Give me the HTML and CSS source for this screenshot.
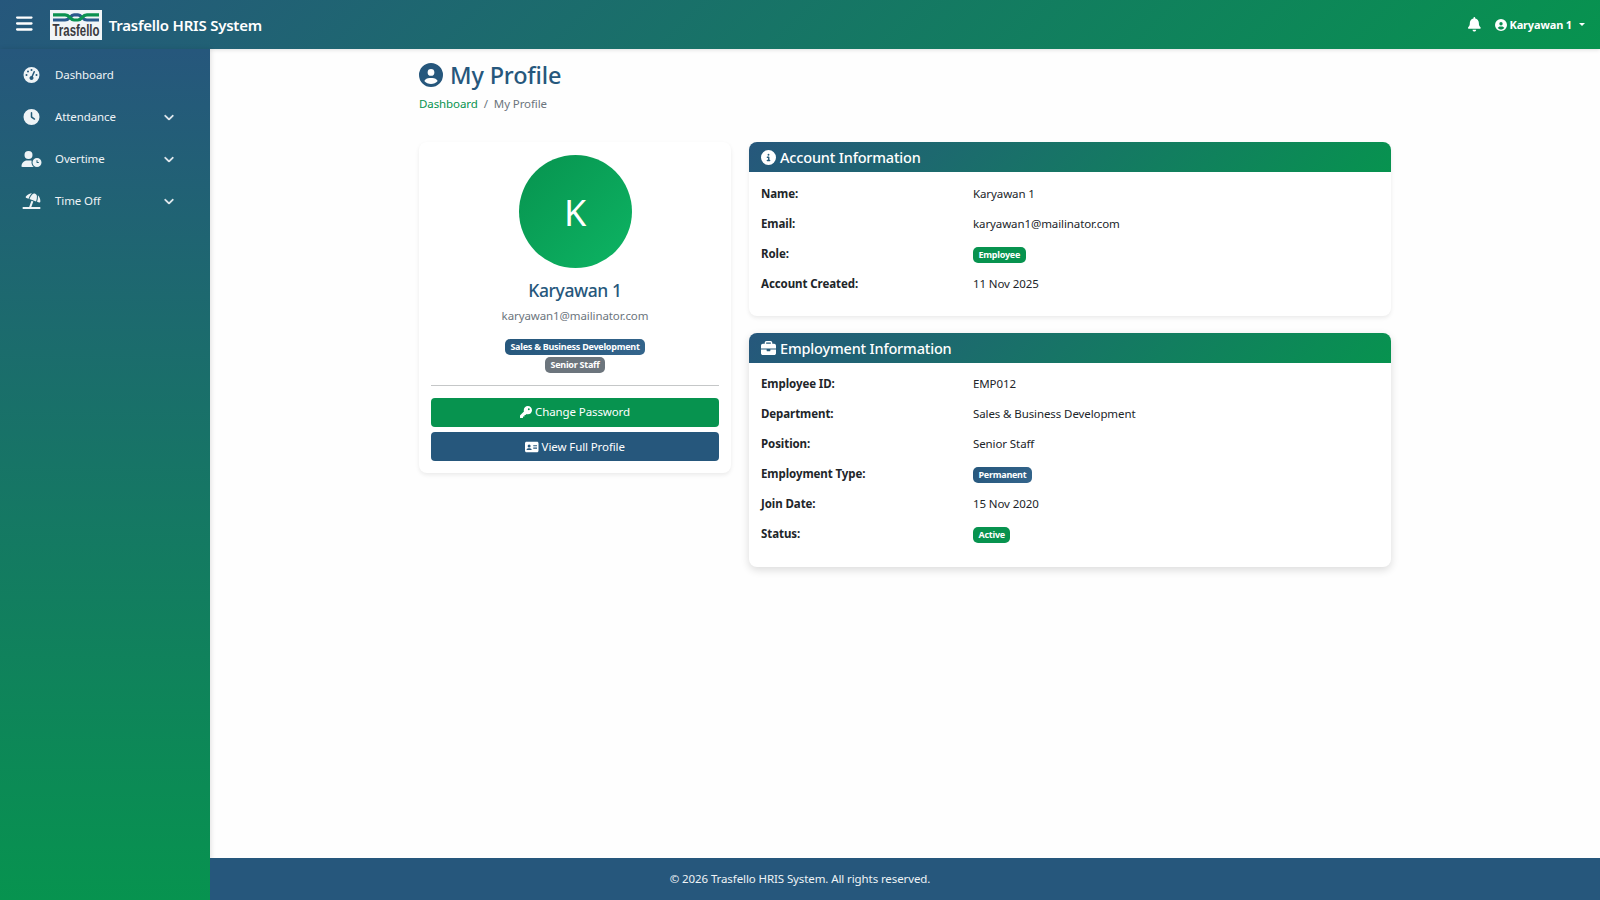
FILE: index.html
```
<!DOCTYPE html>
<html lang="en">
<head>
    <meta charset="UTF-8">
    <meta name="viewport" content="width=device-width, initial-scale=1.0">
    <title>My Profile - Trasfello HRIS System</title>
    <link rel="stylesheet" href="styles.css">
</head>
<body>

<!-- Top navbar -->
<nav class="navbar">
    <button class="navbar-toggle" type="button" aria-label="Toggle sidebar">
        <svg class="icon" viewBox="0 0 448 512"><path d="M0 96C0 78.3 14.3 64 32 64H416c17.7 0 32 14.3 32 32s-14.3 32-32 32H32C14.3 128 0 113.7 0 96zM0 256c0-17.7 14.3-32 32-32H416c17.7 0 32 14.3 32 32s-14.3 32-32 32H32c-17.7 0-32-14.3-32-32zM448 416c0 17.7-14.3 32-32 32H32c-17.7 0-32-14.3-32-32s14.3-32 32-32H416c17.7 0 32 14.3 32 32z"/></svg>
    </button>
    <a class="navbar-brand" href="#">
        <svg class="logo" viewBox="0 0 52 30">
            <rect width="52" height="30" fill="#f1f5f7"/>
            <g fill="none" stroke-width="3.2">
                <path stroke="#2a5a8c" d="M3 10H15C20 10 20 4.8 24 4.8H28C32 4.8 32 10 37 10H49"/>
                <path stroke="#0b9150" d="M3 4.8H15C20 4.8 20 10 24 10H28C32 10 32 4.8 37 4.8H49"/>
            </g>
            <text class="logo-text" x="2.5" y="26" textLength="47" lengthAdjust="spacingAndGlyphs">Trasfello</text>
        </svg>
        <span>Trasfello HRIS System</span>
    </a>
    <div class="navbar-right">
        <a class="navbar-bell" href="#" aria-label="Notifications">
            <svg class="icon" viewBox="0 0 448 512"><path d="M224 0c-17.700 0-32 14.300-32 32V51.200C119 66 64 130.600 64 208v18.800c0 47-17.300 92.400-48.500 127.600l-7.400 8.300c-8.400 9.400-10.400 22.900-5.300 34.400S19.400 416 32 416H416c12.600 0 24-7.400 29.200-18.900s3.100-25-5.300-34.400l-7.400-8.300C401.300 319.200 384 273.900 384 226.800V208c0-77.400-55-142-128-156.800V32c0-17.700-14.300-32-32-32zm45.300 493.300c12-12 18.700-28.300 18.700-45.300H224 160c0 17 6.700 33.300 18.700 45.300s28.300 18.700 45.300 18.700s33.300-6.700 45.300-18.700z"/></svg>
        </a>
        <a class="navbar-user" href="#">
            <svg class="icon" viewBox="0 0 512 512"><path d="M399 384.200C376.900 345.800 335.400 320 288 320H224c-47.400 0-88.900 25.800-111 64.200c35.200 39.200 86.200 63.800 143 63.800s107.800-24.700 143-63.800zM0 256a256 256 0 1 1 512 0A256 256 0 1 1 0 256zm256 16a72 72 0 1 0 0-144 72 72 0 1 0 0 144z"/></svg>
            <span>Karyawan 1</span>
            <i class="caret"></i>
        </a>
    </div>
</nav>

<div class="wrapper">
    <!-- Sidebar -->
    <aside class="sidebar">
        <ul class="sidebar-menu">
            <li><a href="#">
                <svg class="icon" viewBox="0 0 512 512"><path d="M0 256a256 256 0 1 1 512 0A256 256 0 1 1 0 256zM288 96a32 32 0 1 0 -64 0 32 32 0 1 0 64 0zM256 416c35.300 0 64-28.700 64-64c0-17.400-6.900-33.100-18.100-44.600L366 161.700c5.300-12.100-.2-26.300-12.300-31.600s-26.300 .2-31.600 12.300L257.900 288c-.6 0-1.300 0-1.900 0c-35.300 0-64 28.700-64 64s28.700 64 64 64zM176 144a32 32 0 1 0 -64 0 32 32 0 1 0 64 0zM96 288a32 32 0 1 0 0-64 32 32 0 1 0 0 64zm352-32a32 32 0 1 0 -64 0 32 32 0 1 0 64 0z"/></svg>
                <span>Dashboard</span>
            </a></li>
            <li><a href="#">
                <svg class="icon" viewBox="0 0 512 512"><path d="M256 0a256 256 0 1 1 0 512A256 256 0 1 1 256 0zM232 120V256c0 8 4 15.500 10.700 20l96 64c11 7.400 25.900 4.400 33.300-6.700s4.400-25.900-6.700-33.300L280 243.200V120c0-13.300-10.700-24-24-24s-24 10.700-24 24z"/></svg>
                <span>Attendance</span>
                <svg class="chevron" viewBox="0 0 512 512"><path d="M233.400 406.600c12.500 12.500 32.800 12.500 45.300 0l192-192c12.500-12.500 12.500-32.800 0-45.300s-32.800-12.500-45.300 0L256 338.700 86.600 169.400c-12.500-12.500-32.800-12.500-45.300 0s-12.500 32.800 0 45.300l192 192z"/></svg>
            </a></li>
            <li><a href="#">
                <svg class="icon" viewBox="0 0 640 512"><path d="M224 0a128 128 0 1 1 0 256A128 128 0 1 1 224 0zM178.300 304h91.400c20.600 0 40.400 3.500 58.800 9.900C323 331 320 349.100 320 368c0 59.500 29.500 112.100 74.800 144H29.700C13.300 512 0 498.700 0 482.300C0 383.800 79.800 304 178.300 304zM352 368a144 144 0 1 1 288 0 144 144 0 1 1 -288 0zm144-80c-8.800 0-16 7.200-16 16v64c0 8.800 7.200 16 16 16h48c8.800 0 16-7.200 16-16s-7.200-16-16-16H512V304c0-8.800-7.200-16-16-16z"/></svg>
                <span>Overtime</span>
                <svg class="chevron" viewBox="0 0 512 512"><path d="M233.400 406.600c12.500 12.500 32.800 12.500 45.300 0l192-192c12.500-12.500 12.500-32.800 0-45.300s-32.800-12.500-45.300 0L256 338.700 86.600 169.400c-12.500-12.500-32.800-12.500-45.300 0s-12.500 32.800 0 45.300l192 192z"/></svg>
            </a></li>
            <li><a href="#">
                <svg class="icon" viewBox="0 0 576 512"><path d="M346.300 271.800l-60.100-21.900L214 448H32c-17.700 0-32 14.300-32 32s14.300 32 32 32H544c17.700 0 32-14.300 32-32s-14.300-32-32-32H282.100l64.100-176.200zm121.100-.2l-3.300 9.100 67.700 24.600c18.100 6.600 38-4.200 39.600-23.400c6.500-78.500-23.900-155.500-80.800-208.500c2 8 3.200 16.300 3.400 24.800l.2 6c1.800 57-7.300 113.800-26.800 167.400zM462 99.100c-1.100-34.400-22.500-64.800-54.400-77.400c-.9-.4-1.900-.7-2.800-1.100c-33-11.700-69.800-2.400-93.100 23.800l-4 4.500C272.400 88.300 245 134.200 226.800 184l-3.300 9.100L434 269.700l3.300-9.100c18.100-49.800 26.600-102.500 24.900-155.500l-.2-6zM107.200 112.900c-11.100 15.700-2.800 36.800 15.300 43.400l71 25.800 3.300-9.100c19.500-53.600 49.100-103 87.100-145.500l4-4.500c6.200-6.900 13.100-13 20.500-18.200c-79.600 2.500-154.700 42.200-201.200 108z"/></svg>
                <span>Time Off</span>
                <svg class="chevron" viewBox="0 0 512 512"><path d="M233.400 406.600c12.500 12.500 32.800 12.500 45.300 0l192-192c12.500-12.500 12.500-32.800 0-45.300s-32.800-12.500-45.300 0L256 338.700 86.600 169.400c-12.500-12.500-32.800-12.500-45.300 0s-12.500 32.800 0 45.300l192 192z"/></svg>
            </a></li>
        </ul>
    </aside>

    <div class="page">
        <main class="content">
            <header class="page-header">
                <h1>
                    <svg class="icon" viewBox="0 0 512 512"><path d="M399 384.200C376.900 345.800 335.400 320 288 320H224c-47.400 0-88.900 25.800-111 64.200c35.200 39.200 86.200 63.800 143 63.800s107.800-24.700 143-63.800zM0 256a256 256 0 1 1 512 0A256 256 0 1 1 0 256zm256 16a72 72 0 1 0 0-144 72 72 0 1 0 0 144z"/></svg>
                    <span>My Profile</span>
                </h1>
                <ol class="breadcrumb">
                    <li><a href="#">Dashboard</a></li>
                    <li class="active">My Profile</li>
                </ol>
            </header>

            <div class="row">
                <!-- Profile card -->
                <section class="card profile-card">
                    <div class="avatar">K</div>
                    <h2>Karyawan 1</h2>
                    <p class="profile-email">karyawan1@mailinator.com</p>
                    <div class="profile-badges">
                        <span class="badge badge-primary">Sales &amp; Business Development</span>
                        <span class="badge badge-secondary">Senior Staff</span>
                    </div>
                    <hr>
                    <div class="profile-actions">
                        <a class="btn btn-success" href="#">
                            <svg class="icon" viewBox="0 0 512 512"><path d="M336 352c97.200 0 176-78.800 176-176S433.200 0 336 0S160 78.800 160 176c0 18.700 2.900 36.800 8.300 53.700L7 391c-4.500 4.500-7 10.600-7 17v80c0 13.300 10.700 24 24 24h80c13.300 0 24-10.700 24-24V448h40c13.300 0 24-10.700 24-24V384h40c6.400 0 12.500-2.500 17-7l33.300-33.300c16.900 5.400 35 8.300 53.700 8.300zM376 96a40 40 0 1 1 0 80 40 40 0 1 1 0-80z"/></svg>
                            <span>Change Password</span>
                        </a>
                        <a class="btn btn-primary" href="#">
                            <svg class="icon" viewBox="0 0 576 512"><path fill-rule="evenodd" d="M64 32C28.700 32 0 60.700 0 96V416c0 35.300 28.700 64 64 64H512c35.300 0 64-28.700 64-64V96c0-35.300-28.700-64-64-64H64zM64 384c0-44.200 35.800-80 80-80h64c44.200 0 80 35.800 80 80H64zM112 208a64 64 0 1 1 128 0 64 64 0 1 1 -128 0zM352 176H512V208H352zM352 240H512V272H352zM352 304H512V336H352z"/></svg>
                            <span>View Full Profile</span>
                        </a>
                    </div>
                </section>

                <div class="details">
                    <!-- Account information -->
                    <section class="card">
                        <h5 class="card-header">
                            <svg class="icon" viewBox="0 0 512 512"><path d="M256 512A256 256 0 1 0 256 0a256 256 0 1 0 0 512zM216 336h24V272H216c-13.300 0-24-10.700-24-24s10.700-24 24-24h48c13.300 0 24 10.700 24 24v88h8c13.300 0 24 10.700 24 24s-10.700 24-24 24H216c-13.300 0-24-10.700-24-24s10.700-24 24-24zm40-208a32 32 0 1 1 0 64 32 32 0 1 1 0-64z"/></svg>
                            <span>Account Information</span>
                        </h5>
                        <dl class="info-list">
                            <dt>Name:</dt>
                            <dd>Karyawan 1</dd>
                            <dt>Email:</dt>
                            <dd>karyawan1@mailinator.com</dd>
                            <dt>Role:</dt>
                            <dd><span class="badge badge-success">Employee</span></dd>
                            <dt>Account Created:</dt>
                            <dd>11 Nov 2025</dd>
                        </dl>
                    </section>

                    <!-- Employment information -->
                    <section class="card card-raised">
                        <h5 class="card-header">
                            <svg class="icon" viewBox="0 0 512 512"><path d="M184 48H328c4.400 0 8 3.600 8 8V96H176V56c0-4.400 3.600-8 8-8zm-56 8V96H64C28.700 96 0 124.700 0 160v96H192 320 512V160c0-35.300-28.700-64-64-64H384V56c0-30.900-25.100-56-56-56H184c-30.900 0-56 25.100-56 56zM512 288H320v32c0 17.700-14.300 32-32 32H224c-17.700 0-32-14.300-32-32V288H0V416c0 35.300 28.700 64 64 64H448c35.300 0 64-28.700 64-64V288z"/></svg>
                            <span>Employment Information</span>
                        </h5>
                        <dl class="info-list">
                            <dt>Employee ID:</dt>
                            <dd>EMP012</dd>
                            <dt>Department:</dt>
                            <dd>Sales &amp; Business Development</dd>
                            <dt>Position:</dt>
                            <dd>Senior Staff</dd>
                            <dt>Employment Type:</dt>
                            <dd><span class="badge badge-primary">Permanent</span></dd>
                            <dt>Join Date:</dt>
                            <dd>15 Nov 2020</dd>
                            <dt>Status:</dt>
                            <dd><span class="badge badge-success">Active</span></dd>
                        </dl>
                    </section>
                </div>
            </div>
        </main>

        <footer class="footer">&copy; 2026 Trasfello HRIS System. All rights reserved.</footer>
    </div>
</div>

</body>
</html>
```
FILE: styles.css
```
:root {
    --blue: #26577c;
    --green: #07934f;
    --gradient: linear-gradient(135deg, #26577c 0%, #07934f 100%);
    --text: #212529;
    --muted: #6c757d;
    --sidebar-width: 210px;
}

* {
    margin: 0;
    padding: 0;
    box-sizing: border-box;
}

body {
    font-family: "Noto Sans", "Open Sans", sans-serif;
    font-size: 11.5px;
    line-height: 18px;
    letter-spacing: -0.1px;
    color: var(--text);
    background: #fefefe;
    height: 100vh;
    display: flex;
    flex-direction: column;
    overflow: hidden;
}

a {
    color: inherit;
    text-decoration: none;
}

ul,
ol {
    list-style: none;
}

.icon,
.chevron {
    fill: currentColor;
    height: 1em;
    flex: none;
}

/* Navbar */
.navbar {
    height: 49px;
    flex: none;
    display: flex;
    align-items: center;
    padding: 0 15px 0 16px;
    color: #fff;
    background: var(--gradient);
    box-shadow: 0 1px 4px rgba(0, 0, 0, 0.12);
}

.navbar-toggle {
    display: flex;
    margin: -3px 17px 0 0;
    color: inherit;
    font-size: 19px;
    background: none;
    border: 0;
}

.navbar-brand {
    display: flex;
    align-items: center;
    gap: 7px;
    font-size: 15px;
    font-weight: 600;
    letter-spacing: -0.22px;
}

.logo {
    width: 52px;
    height: 30px;
    overflow: visible;
}

.logo-text {
    font-family: "Liberation Sans", sans-serif;
    font-size: 16px;
    font-weight: 700;
    letter-spacing: 0;
    fill: #3a3a3e;
}

.navbar-right {
    margin-left: auto;
    display: flex;
    align-items: center;
    gap: 14px;
}

.navbar-bell {
    display: flex;
    font-size: 14.5px;
}

.navbar-user {
    display: flex;
    align-items: center;
    gap: 3px;
    font-size: 11px;
    font-weight: 700;
    letter-spacing: -0.15px;
}

.navbar-user .icon {
    font-size: 12px;
}

.caret {
    margin-left: 4px;
    border-top: 3.5px solid;
    border-left: 3.5px solid transparent;
    border-right: 3.5px solid transparent;
}

.wrapper {
    flex: 1;
    display: flex;
}

/* Sidebar */
.sidebar {
    width: var(--sidebar-width);
    flex: none;
    padding: 5px 8px;
    color: #eef3f6;
    background: linear-gradient(180deg, #26577c 0%, #07934f 100%);
    box-shadow: 1px 0 5px rgba(0, 0, 0, 0.12);
}

.sidebar-menu a {
    height: 42px;
    display: flex;
    align-items: center;
    padding: 0 28px 0 13px;
}

.sidebar-menu .icon {
    width: 21px;
    height: 16px;
    margin-right: 13px;
}

.sidebar-menu .chevron {
    margin-left: auto;
    font-size: 10px;
    stroke: currentColor;
    stroke-width: 28px;
}

/* Page */
.page {
    flex: 1;
    display: flex;
    flex-direction: column;
}

.content {
    flex: 1;
    width: 972px;
    margin: 0 auto;
    padding-top: 11px;
}

.page-header h1 {
    display: flex;
    align-items: center;
    gap: 7px;
    font-size: 23.5px;
    font-weight: 500;
    line-height: 30px;
    letter-spacing: -0.15px;
    color: var(--blue);
}

.page-header .icon {
    font-size: 24px;
}

.breadcrumb {
    display: flex;
    margin-top: 5px;
    color: var(--muted);
}

.breadcrumb a {
    color: var(--green);
}

.breadcrumb li + li::before {
    content: "/";
    padding: 0 6px;
}

.row {
    display: flex;
    align-items: flex-start;
    gap: 18px;
    margin-top: 29px;
}

/* Cards */
.card {
    background: #fff;
    border-radius: 8px;
    box-shadow: 0 2px 4px rgba(0, 0, 0, 0.08);
}

.card-raised {
    box-shadow: 0 3px 9px rgba(0, 0, 0, 0.14);
}

.card-header {
    height: 30px;
    display: flex;
    align-items: center;
    gap: 4px;
    padding: 0 12px;
    border-radius: 8px 8px 0 0;
    font-size: 14.5px;
    font-weight: 500;
    letter-spacing: -0.17px;
    color: #fff;
    background: var(--gradient);
}

.card-header .icon {
    font-size: 15px;
}

.profile-card {
    width: 312px;
    flex: none;
    padding: 13px 12px 12px;
    text-align: center;
}

.avatar {
    width: 113px;
    height: 113px;
    margin: 0 auto 11px;
    border-radius: 50%;
    font-size: 36px;
    line-height: 116px;
    color: #fff;
    background: linear-gradient(135deg, #07934f 0%, #0db463 100%);
}

.profile-card h2 {
    font-size: 17.5px;
    font-weight: 500;
    line-height: 22px;
    letter-spacing: -0.4px;
    color: var(--blue);
}

.profile-email {
    margin-top: 6px;
    color: var(--muted);
}

.profile-badges {
    display: flex;
    flex-direction: column;
    align-items: center;
    gap: 2px;
    margin-top: 14px;
}

.badge {
    display: inline-block;
    height: 16px;
    padding: 0 5.5px;
    border-radius: 5px;
    font-size: 9px;
    font-weight: 700;
    line-height: 16px;
    letter-spacing: -0.25px;
    color: #fff;
}

.badge-primary {
    background: linear-gradient(135deg, #26577c 0%, #34658c 100%);
}

.badge-secondary {
    background: #6c757d;
}

.badge-success {
    background: var(--green);
}

.profile-card hr {
    margin: 12px 0 11.5px;
    border: 0;
    border-top: 1px solid #c5c7c8;
}

.profile-actions {
    display: flex;
    flex-direction: column;
    gap: 5.5px;
}

.btn {
    height: 29px;
    display: flex;
    align-items: center;
    justify-content: center;
    gap: 3px;
    border-radius: 4px;
    color: #fff;
}

.btn .icon {
    font-size: 12px;
}

.btn-success {
    background: var(--green);
}

.btn-primary {
    background: var(--blue);
}

.details {
    flex: 1;
    display: flex;
    flex-direction: column;
    gap: 17px;
}

.info-list {
    display: grid;
    grid-template-columns: 212px 1fr;
    grid-auto-rows: 18px;
    row-gap: 12px;
    padding: 13px 12px 23px;
}

.card-raised .info-list {
    padding: 12px 12px 24px;
}

.info-list dt {
    font-weight: 700;
    letter-spacing: -0.08px;
}

/* Footer */
.footer {
    height: 42px;
    flex: none;
    padding-right: var(--sidebar-width);
    line-height: 42px;
    text-align: center;
    color: #eef3f6;
    background: var(--blue);
}
```
